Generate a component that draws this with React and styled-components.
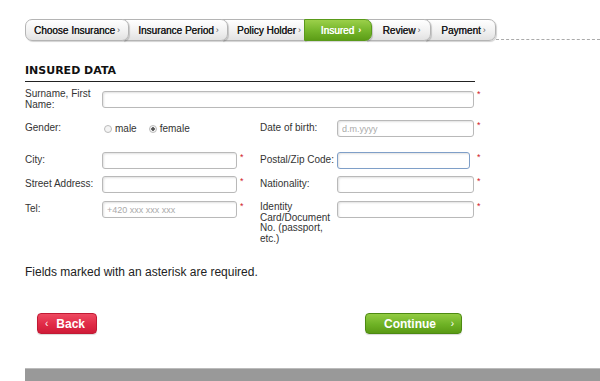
import * as React from "react"
import styled, { createGlobalStyle, css } from "styled-components"

const Global = createGlobalStyle`
	body {
		margin: 0;
		background: #fff;
		font-family: "Liberation Sans", Arial, sans-serif;
		color: #222;
	}
`

const Page = styled.div`
	width: 600px;
	height: 381px;
	overflow: hidden;
	display: flex;
	flex-direction: column;
	padding-top: 19px;
	box-sizing: border-box;
`

const Steps = styled.nav`
	display: flex;
	align-items: stretch;
	height: 22px;
	padding-left: 25px;
`

const Step = styled.div`
	position: relative;
	width: ${(p) => p.$w}px;
	box-sizing: border-box;
	margin-left: -6px;
	padding-left: 6px;
	display: flex;
	align-items: center;
	justify-content: center;
	font-size: 10px;
	color: #1a1a1a;
	text-shadow: 0.3px 0 0 #1a1a1a;
	border: 1px solid #b4b4b4;
	border-radius: 0 7px 7px 0;
	background: linear-gradient(#ffffff, #f1f1f1 55%, #e2e2e2);
	box-shadow: 1px 1px 1px rgba(0, 0, 0, 0.18);
	z-index: ${(p) => p.$z};
	&:first-child {
		margin-left: 0;
		padding-left: 0;
		border-radius: 7px;
	}
	span {
		font-size: 9px;
		margin-left: 2px;
		color: #666;
		text-shadow: none;
	}
	${(p) =>
		p.$active &&
		css`
			color: #fff;
			text-shadow: 0.3px 0 0 #fff;
			border-color: #5a9a1a;
			background: linear-gradient(#9bd04a, #74b52a 55%, #5c9d17);
			span {
				color: #fff;
				margin-left: 4px;
				font-weight: bold;
			}
		`}
`

const Dash = styled.div`
	flex: 1;
	align-self: flex-end;
	margin-bottom: 1px;
	border-bottom: 1px dashed #aaa;
`

const Form = styled.section`
	padding: 0 0 0 25px;
	margin-top: 23px;
	width: 450px;
`

const Heading = styled.h2`
	margin: 0;
	font-family: "DejaVu Sans", Verdana, sans-serif;
	font-size: 11px;
	font-weight: bold;
	color: #111;
	padding-bottom: 4px;
	border-bottom: 1px solid #222;
`

const Row = styled.div`
	display: grid;
	grid-template-columns: 77px 135px 23px 77px 137px 10px;
	align-items: start;
	margin-top: ${(p) => p.$mt}px;
`

const Label = styled.label`
	min-height: 17px;
	display: flex;
	align-items: center;
	font-size: 10px;
	line-height: 10.5px;
	color: #333;
	white-space: ${(p) => (p.$nowrap ? "nowrap" : "normal")};
`

const Input = styled.input`
	box-sizing: border-box;
	height: 17px;
	width: ${(p) => (p.$w ? `${p.$w}px` : "100%")};
	grid-column: ${(p) => p.$span || "auto"};
	margin: 0;
	padding: 0 4px;
	font-family: "Liberation Sans", Arial, sans-serif;
	font-size: 9px;
	color: #333;
	border: 1px solid ${(p) => (p.$focus ? "#7f9fc8" : "#b9b9b9")};
	border-radius: 3px;
	background: #fff;
	box-shadow: inset 1px 1px 2px rgba(0, 0, 0, 0.12);
	outline: none;
	&::placeholder {
		color: #aaa;
	}
`

const Star = styled.span`
	font-size: 9px;
	line-height: 9px;
	color: #d0202a;
	padding: 1px 0 0 3px;
`

const Radios = styled.div`
	grid-column: 2 / 4;
	min-height: 17px;
	display: flex;
	align-items: center;
	gap: 12px;
	padding-left: 2px;
	font-size: 10px;
	color: #333;
`

const Radio = styled.span`
	display: flex;
	align-items: center;
	gap: 3px;
	&::before {
		content: "";
		width: 6px;
		height: 6px;
		border-radius: 50%;
		border: 1px solid #bbb;
		background: ${(p) =>
			p.$checked
				? "radial-gradient(circle, #555 0 1.5px, #f4f4f4 2px)"
				: "#f4f4f4"};
	}
`

const Note = styled.p`
	margin: 21px 0 0 25px;
	font-size: 12px;
	color: #222;
`

const Actions = styled.div`
	display: flex;
	justify-content: space-between;
	width: 425px;
	margin: 34px 0 0 37px;
`

const Button = styled.button`
	height: 21px;
	width: ${(p) => p.$w}px;
	display: flex;
	align-items: center;
	justify-content: space-between;
	padding: 0 7px;
	box-sizing: border-box;
	border-radius: 4px;
	font-family: "Liberation Sans", Arial, sans-serif;
	font-weight: bold;
	font-size: 12px;
	color: #fff;
	border: 1px solid ${(p) => (p.$green ? "#4d8a12" : "#c11a34")};
	background: ${(p) =>
		p.$green
			? "linear-gradient(#92cc42, #6eb225 55%, #5a9a14)"
			: "linear-gradient(#ee4a61, #e02a46 55%, #cf1b38)"};
	box-shadow: 0 1px 1px rgba(0, 0, 0, 0.15);
	small {
		font-size: 10px;
		font-weight: normal;
	}
`

const Footer = styled.div`
	margin: auto 0 0 25px;
	height: 12px;
	background: #999;
	border-top: 1px solid #bbb;
`

const steps = [
	{ label: "Choose Insurance", w: 104 },
	{ label: "Insurance Period", w: 105 },
	{ label: "Policy Holder", w: 88 },
	{ label: "Insured", w: 68, active: true },
	{ label: "Review", w: 65 },
	{ label: "Payment", w: 71 },
]

export default function App() {
	return (
		<Page>
			<Global />
			<Steps>
				{steps.map((s, i) => (
					<Step key={s.label} $w={s.w} $active={s.active} $z={s.active ? 10 : 9 - i}>
						{s.label}
						<span>›</span>
					</Step>
				))}
				<Dash />
			</Steps>

			<Form>
				<Heading>INSURED DATA</Heading>
				<Row $mt={7}>
					<Label>Surname, First Name:</Label>
					<Input $span="2 / 6" style={{ marginTop: 2 }} />
					<Star>*</Star>
				</Row>
				<Row $mt={10}>
					<Label>Gender:</Label>
					<Radios>
						<Radio>male</Radio>
						<Radio $checked>female</Radio>
					</Radios>
					<Label>Date of birth:</Label>
					<Input placeholder="d.m.yyyy" />
					<Star>*</Star>
				</Row>
				<Row $mt={15}>
					<Label>City:</Label>
					<Input />
					<Star>*</Star>
					<Label $nowrap>Postal/Zip Code:</Label>
					<Input $focus $w={133} />
					<Star>*</Star>
				</Row>
				<Row $mt={7}>
					<Label>Street Address:</Label>
					<Input />
					<Star>*</Star>
					<Label>Nationality:</Label>
					<Input />
					<Star>*</Star>
				</Row>
				<Row $mt={8}>
					<Label>Tel:</Label>
					<Input placeholder="+420 xxx xxx xxx" />
					<Star>*</Star>
					<Label style={{ paddingTop: 1 }}>Identity Card/Document No. (passport, etc.)</Label>
					<Input />
					<Star>*</Star>
				</Row>
			</Form>

			<Note>Fields marked with an asterisk are required.</Note>

			<Actions>
				<Button $w={60}>
					<small>‹</small>
					<span style={{ marginRight: 4 }}>Back</span>
				</Button>
				<Button $w={97} $green>
					<span style={{ marginLeft: 11 }}>Continue</span>
					<small>›</small>
				</Button>
			</Actions>

			<Footer />
		</Page>
	)
}
